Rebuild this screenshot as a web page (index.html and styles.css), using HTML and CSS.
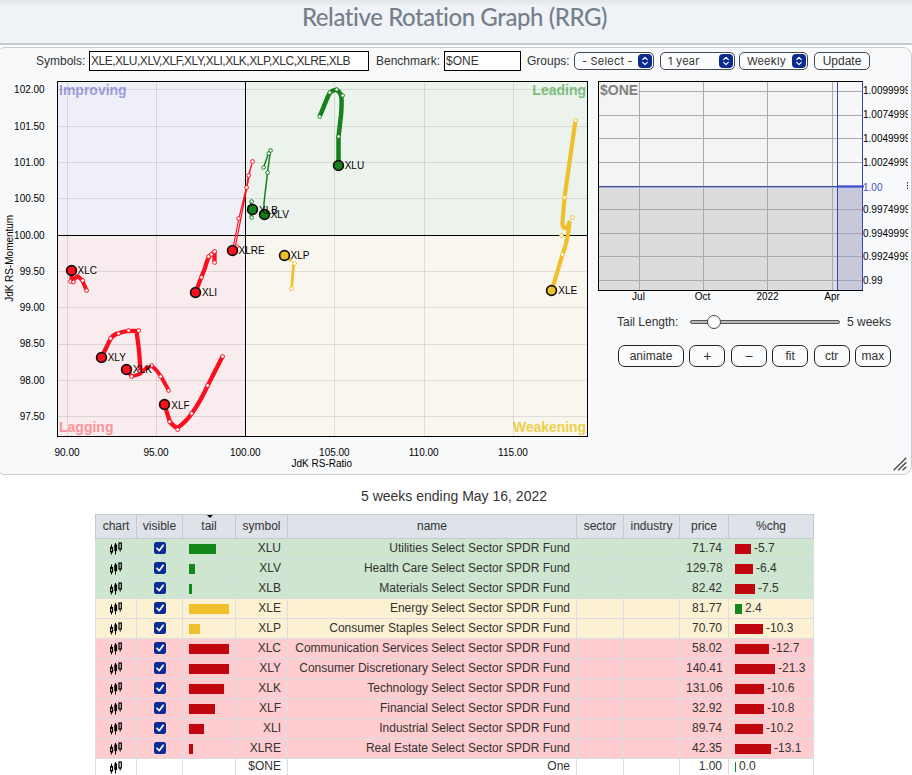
FILE: index.html
```html
<!DOCTYPE html>
<html lang="en">
<head>
<meta charset="utf-8">
<title>Relative Rotation Graph (RRG)</title>
<link rel="stylesheet" href="styles.css">
</head>
<body>
<header class="page-header"><h1>Relative Rotation Graph (RRG)</h1></header>
<main>
<section class="panel">
  <form class="toolbar">
    <label class="lbl-symbols" for="symbols">Symbols:</label>
    <input id="symbols" class="field symbols" type="text" value="XLE,XLU,XLV,XLF,XLY,XLI,XLK,XLP,XLC,XLRE,XLB">
    <label class="lbl-bench" for="bench">Benchmark:</label>
    <input id="bench" class="field bench" type="text" value="$ONE">
    <span class="lbl-groups">Groups:</span>
    <div class="select groups"><span>- Select -</span><svg class="stepper" viewBox="0 0 14 14"><path d="M4.7 5.6 7 3.4l2.3 2.2M4.7 8.4 7 10.6l2.3-2.2"/></svg></div>
    <div class="select period"><span>1 year</span><svg class="stepper" viewBox="0 0 14 14"><path d="M4.7 5.6 7 3.4l2.3 2.2M4.7 8.4 7 10.6l2.3-2.2"/></svg></div>
    <div class="select freq"><span>Weekly</span><svg class="stepper" viewBox="0 0 14 14"><path d="M4.7 5.6 7 3.4l2.3 2.2M4.7 8.4 7 10.6l2.3-2.2"/></svg></div>
    <button class="update" type="button">Update</button>
  </form>
  <div class="charts">
    <svg class="rrg" viewBox="0 75 594 399" width="594" height="399">
      <rect x="58" y="82" width="187" height="153" fill="#efeff8"/>
      <rect x="245" y="82" width="342" height="153" fill="#ebf3ec"/>
      <rect x="58" y="235" width="187" height="201" fill="#f9ecee"/>
      <rect x="245" y="235" width="342" height="201" fill="#f9f6ef"/>
      <g class="corner">
        <text x="59" y="95" fill="#9c9cdd">Improving</text>
        <text x="586" y="95" text-anchor="end" fill="#7fbf82">Leading</text>
        <text x="59" y="432" fill="#fb9399">Lagging</text>
        <text x="586" y="432" text-anchor="end" fill="#ecd04c" textLength="73">Weakening</text>
      </g>
      <path class="grid" d="M67.5 82V436M156.5 82V436M334.5 82V436M424.5 82V436M513.5 82V436M58 89.5H587M58 126.5H587M58 162.5H587M58 198.5H587M58 271.5H587M58 307.5H587M58 344.5H587M58 380.5H587M58 416.5H587"/>
      <path class="axis" d="M245.5 82V436M58 235.5H587"/>
      <rect class="frame" x="57.5" y="81.5" width="530" height="355"/>
      <g class="tick" text-anchor="end">
        <text x="44.700" y="93.3">102.00</text><text x="44.700" y="129.5">101.50</text><text x="44.700" y="166">101.00</text><text x="44.700" y="202.3">100.50</text><text x="44.700" y="238.5">100.00</text><text x="44.700" y="274.7">99.50</text><text x="44.700" y="311">99.00</text><text x="44.700" y="347.3">98.50</text><text x="44.700" y="383.5">98.00</text><text x="44.700" y="420">97.50</text>
      </g>
      <g class="tick" text-anchor="middle">
        <text x="67" y="456.3">90.00</text><text x="156" y="456.3">95.00</text><text x="245.3" y="456.3">100.00</text><text x="334.4" y="456.3">105.00</text><text x="423.7" y="456.3">110.00</text><text x="513" y="456.3">115.00</text>
        <text x="321.8" y="467.2" textLength="60.5">JdK RS-Ratio</text>
        <text transform="translate(12.8 258.3) rotate(-90)" textLength="87">JdK RS-Momentum</text>
      </g>
      <g class="green">
        <path stroke-width="4.5" d="M319.7 116.3C324 107 327 97 330 92.7Q336.500 86.500 340.500 94Q342.500 98 341 115L338.500 137V165"/>
        <path stroke-width="1.5" d="M264 214V203L267.500 172.500L270.500 150.500L268.500 153.500L263.500 167.500"/>
        <path stroke-width="2.5" d="M252 210L251 201.500V217M249 205V213"/>
        <g class="dots"><circle cx="319.7" cy="116.5" r="1.8"/><circle cx="329.700" cy="92.500" r="1.8"/><circle cx="336.700" cy="89.500" r="1.8"/><circle cx="342.700" cy="95.500" r="1.8"/><circle cx="338.600" cy="136.500" r="1.8"/><circle cx="270.600" cy="150.500" r="1.8"/><circle cx="268.700" cy="153.500" r="1.8"/><circle cx="263.600" cy="167.500" r="1.8"/><circle cx="267.600" cy="172.600" r="1.8"/><circle cx="251.600" cy="201.500" r="1.8"/><circle cx="251.600" cy="217.500" r="1.8"/></g>
      </g>
      <g class="red">
        <path stroke-width="1.2" d="M232.500 250.500L239 218L246.500 187L248.500 175L252 164M235.500 246L239 228L246.500 190L251 166"/>
        <path stroke-width="4.300" d="M195.500 292.500Q199 283 205 268Q208 256 211.500 254.500L214.500 252V262"/>
        <path stroke-width="4" d="M71.500 270.500V281M73 280L77.500 276L82 280L86.500 290"/>
        <path stroke-width="4.300" d="M101.500 357.500Q107 346 110.700 338.500Q114 334 118.500 333.500Q125 330.500 136.500 331Q139.500 350 140.500 370.500"/>
        <path stroke-width="3.800" d="M126.500 369.500L131.500 376.500L140 374L146 368L152 366Q157 370 161 376.500L168.500 390"/>
        <path stroke-width="4.300" d="M164.500 404.500Q167 413 170 422Q176 429 178.500 427Q186 422 192.500 412.500Q200 402 208 385L222.500 356.500"/>
        <g class="dots"><circle cx="252.500" cy="161.500" r="1.9"/><circle cx="248.600" cy="175.500" r="1.9"/><circle cx="246.600" cy="187.500" r="1.9"/><circle cx="238.600" cy="218.500" r="1.9"/><circle cx="236.500" cy="246.500" r="1.9"/><circle cx="201.500" cy="277.300" r="1.9"/><circle cx="208.600" cy="256.500" r="1.9"/><circle cx="214.600" cy="251.500" r="1.9"/><circle cx="211.500" cy="254.500" r="1.9"/><circle cx="214.600" cy="262.500" r="1.9"/><circle cx="70.500" cy="281.500" r="1.9"/><circle cx="73.500" cy="282" r="1.9"/><circle cx="82.600" cy="280.500" r="1.9"/><circle cx="86.600" cy="290.500" r="1.9"/><circle cx="110.600" cy="338.500" r="1.9"/><circle cx="118.600" cy="333.500" r="1.9"/><circle cx="128.600" cy="330.500" r="1.9"/><circle cx="138.700" cy="330.500" r="1.9"/><circle cx="131.600" cy="376.500" r="1.9"/><circle cx="151.600" cy="365.500" r="1.9"/><circle cx="160.600" cy="376.500" r="1.9"/><circle cx="168.600" cy="390.500" r="1.9"/><circle cx="169.600" cy="421.700" r="1.9"/><circle cx="177.600" cy="429.600" r="1.9"/><circle cx="191.600" cy="413.500" r="1.9"/><circle cx="207.600" cy="385.500" r="1.9"/><circle cx="222.600" cy="356.500" r="1.9"/></g>
      </g>
      <g class="gold">
        <path stroke-width="4.200" d="M575.500 120.500L564.500 197.500L562.500 222Q562 229 566.500 228L569.500 222.500Q568 240 562.500 254.500L552 290"/>
        <path stroke-width="2.800" d="M284.500 255.500L291.500 261M293.700 263L291.600 288"/>
        <g class="dots"><circle cx="575.500" cy="120.500" r="1.9"/><circle cx="564.500" cy="197.500" r="1.9"/><circle cx="572.500" cy="217.500" r="1.9"/><circle cx="561.500" cy="235.500" r="1.9"/><circle cx="562.500" cy="254.500" r="1.9"/><circle cx="294.500" cy="263.500" r="1.9"/><circle cx="291.500" cy="288.500" r="1.9"/></g>
      </g>
      <g class="heads">
        <g fill="#15801d"><circle cx="338.500" cy="165.500" r="4.900"/><circle cx="252.500" cy="209.500" r="4.900"/><circle cx="264.500" cy="214.500" r="4.900"/></g>
        <g fill="#fb0f1f"><circle cx="232.500" cy="250.500" r="4.900"/><circle cx="195.500" cy="292.500" r="4.900"/><circle cx="71.500" cy="270.500" r="4.900"/><circle cx="101.500" cy="357.500" r="4.900"/><circle cx="126.500" cy="369.500" r="4.900"/><circle cx="164.500" cy="404.500" r="4.900"/></g>
        <g fill="#f0c02c"><circle cx="551.500" cy="290.500" r="4.900"/><circle cx="284.500" cy="255.500" r="4.900"/></g>
      </g>
      <g class="tick">
        <text x="344.700" y="169">XLU</text><text x="259" y="213.500">XLB</text><text x="270.700" y="218">XLV</text><text x="238.500" y="254">XLRE</text><text x="290.500" y="259.300">XLP</text><text x="202" y="296.300">XLI</text><text x="77.500" y="274.300">XLC</text><text x="107.700" y="361.300">XLY</text><text x="133" y="373.300">XLK</text><text x="171.300" y="408.500">XLF</text><text x="558.300" y="294">XLE</text>
      </g>
    </svg>
    <div class="side">
      <svg class="mini" viewBox="594 75 314 232" width="314" height="232">
        <rect x="599" y="82" width="264" height="104" fill="#f4f4f4"/>
        <rect x="599" y="186" width="264" height="104" fill="#dcdcdc"/>
        <rect x="837" y="82" width="26" height="104" fill="#f7f7fa"/>
        <path class="mini-grid" d="M639.500 82V290M703.500 82V290M767.500 82V290M832.500 82V290M599 91.500H863M599 115.500H863M599 138.500H863M599 162.500H863M599 209.500H863M599 233.500H863M599 256.500H863M599 280.500H863"/>
        <rect x="837" y="186" width="26" height="104" fill="#8f8fd8" fill-opacity=".26"/>
        <rect x="599" y="82" width="39" height="14" fill="#f4f4f4"/>
        <rect class="frame" x="598.500" y="81.500" width="264" height="209"/>
        <path d="M599 187.500H837" stroke="#a6a6e2"/><path d="M599 186.500H837" stroke="#3f4a91"/>
        <path d="M837.500 82V290M862.500 82V290" stroke="#3548b5"/>
        <path d="M837 186.500H864" stroke="#3d50cd" stroke-width="2.300"/>
        <text class="mini-title" x="600" y="95">$ONE</text>
        <g class="tick">
          <text x="863" y="94.300">1.009999999</text><text x="863" y="118.300">1.007499999</text><text x="863" y="142">1.004999999</text><text x="863" y="165.500">1.002499999</text><text x="863" y="191.300" class="now">1.00</text><text x="863" y="213.300">0.997499999</text><text x="863" y="236.500">0.994999999</text><text x="863" y="260.300">0.992499999</text><text x="863" y="283.500">0.99</text>
        </g>
        <path d="M907.500 182v7" stroke="#222" stroke-width="1" stroke-dasharray="1.500 1.300"/>
        <g class="tick" text-anchor="middle"><text x="638.500" y="300.300">Jul</text><text x="702.500" y="300.300">Oct</text><text x="767.500" y="300.300">2022</text><text x="832" y="300.300">Apr</text></g>
      </svg>
      <div class="tail-row"><span class="tail-label">Tail Length:</span><div class="slider"><span class="knob"></span></div><span>5 weeks</span></div>
      <div class="actions"><button class="wide">animate</button><button class="sign">+</button><button class="sign">−</button><button>fit</button><button>ctr</button><button>max</button></div>
      <svg class="grip" viewBox="0 0 14 14"><path d="M.7 13.300 13.300.7M5.200 13.300 13.300 5.200M9.700 13.300 13.300 9.700"/></svg>
    </div>
  </div>
</section>
<p class="range">5 weeks ending May 16, 2022</p>
<table class="funds">
  <colgroup><col class="c1"><col class="c2"><col class="c3"><col class="c4"><col class="c5"><col class="c6"><col class="c7"><col class="c8"><col class="c9"></colgroup>
  <thead><tr><th>chart</th><th>visible</th><th class="sorted">tail</th><th>symbol</th><th>name</th><th>sector</th><th>industry</th><th>price</th><th>%chg</th></tr></thead>
  <tbody id="rows"></tbody>
</table>
</main>
<script src="app.js"></script>
</body>
</html>
```

FILE: styles.css
```css
* { box-sizing: border-box; }
body { margin: 0; height: 775px; overflow: hidden; background: #fff; color: #333; font: 12px "Liberation Sans", Arial, sans-serif; }
.page-header { height: 45px; border-bottom: 2px solid #c6cacf; background: linear-gradient(#e3e5e9, #eff2f6 7px, #f0f3f7); text-align: center; }
.page-header h1 { margin: 0; padding-right: 3px; color: #75808b; font: 500 24px/34px Lato, sans-serif; letter-spacing: -.42px; }
.panel { width: 916px; height: 428px; margin: 2px 0 0 -4px; padding-left: 3px; border: 1px solid #c9ccd0; border-radius: 9px; background: #f7f9fb; }
.toolbar { display: flex; height: 27px; padding: 3px 0 0 36px; align-items: flex-start; line-height: 20px; }
.lbl-symbols { width: 53px; }
.lbl-bench { width: 75px; padding-left: 7px; }
.lbl-groups { width: 53px; padding-left: 6px; }
.field { height: 20px; padding: 0 2px; border: 1px solid #000; background: #fff; color: #333; font: 12px "Liberation Sans", Arial, sans-serif; }
.symbols { width: 280px; padding-left: 1px; letter-spacing: -.48px; }
.bench { width: 77px; padding-left: 1px; }
.select, .update { height: 18px; margin-top: 1px; border: 1px solid #45484c; border-radius: 5px; background: #fbfcfd; color: #333; }
.select { display: flex; justify-content: space-between; align-items: center; padding: 0 1px 0 7px; font: 11px/16px Inter, sans-serif; letter-spacing: .2px; }
.groups { width: 80px; }
.period { width: 75px; margin-left: 6px; }
.freq { width: 69px; margin-left: 4px; }
.stepper { width: 14px; height: 14px; border-radius: 4px; background: #0b2b8e; }
.stepper path { fill: none; stroke: #fff; stroke-width: 1.2; stroke-linecap: round; stroke-linejoin: round; }
.update { width: 56px; margin-left: 6px; padding: 0; font: 12px "Liberation Sans", Arial, sans-serif; }
.charts { display: flex; }
.rrg, .mini { display: block; flex: none; }
.grid { stroke: #000; stroke-opacity: .1; }
.axis, .frame { stroke: #000; fill: none; }
.corner, .mini-title { font-size: 14px; font-weight: bold; }
.mini-title { fill: #808080; }
.mini-grid { stroke: #aaa; }
.tick { font-size: 10px; fill: #000; }
.tick .now { fill: #4650c4; }
.green > path, .red > path, .gold > path { fill: none; stroke-linejoin: round; }
.green { stroke: #15801d; }
.red { stroke: #fb0f1f; }
.gold { stroke: #f0c02c; }
.dots { fill: #fff; stroke-width: 1; }
.heads { stroke: #111; stroke-width: 1.7; }
.side { position: relative; width: 317px; }
.tail-row { display: flex; align-items: center; height: 29px; padding-left: 23px; }
.tail-label { width: 73px; }
.slider { display: flex; align-items: center; width: 150px; height: 4px; margin-right: 7px; padding-left: 16px; border: 1px solid #555; border-radius: 2px; background: #b8b8b8; }
.knob { flex: none; width: 14px; height: 14px; border: 1px solid #444; border-radius: 50%; background: #fff; }
.actions { display: flex; gap: 5.4px; padding: 9px 0 0 24px; }
.actions button { width: 36px; height: 22px; padding: 0; border: 1px solid #222; border-radius: 7px; background: #fafbfc; color: #333; font: 12px "Liberation Sans", Arial, sans-serif; }
.actions .wide { width: 66px; }
.actions .sign { font-size: 14px; line-height: 18px; }
.grip { position: absolute; right: 4px; bottom: 3px; width: 14px; height: 14px; }
.grip path { fill: none; stroke: #444; stroke-width: 1.3; }
.range { height: 39px; margin: 0; padding-right: 4px; font-size: 14px; line-height: 42px; text-align: center; }
.funds { width: 719px; margin-left: 95px; table-layout: fixed; border-collapse: collapse; }
.c1 { width: 41px; } .c2 { width: 46px; } .c3 { width: 53px; } .c4 { width: 52px; } .c5 { width: 289px; }
.c6 { width: 47px; } .c7 { width: 56px; } .c8 { width: 49px; } .c9 { width: 85px; }
.funds th, .funds td { padding: 0 6px; border: 1px solid #d8dfe2; text-align: right; white-space: nowrap; }
.funds th { height: 24px; padding: 0 0 2px; border-color: #c6cbd0; background: #dee2e9; font-weight: normal; text-align: center; }
.funds td { height: 20px; line-height: 17px; }
.funds .icon { padding: 0; text-align: center; }
.funds .icon svg { display: block; margin: 0 auto; }
.funds .lead .icon, .funds .weak .icon, .funds .lag .icon { padding-bottom: 1px; }
.sorted { position: relative; }
.sorted::before { position: absolute; top: 0; left: 24px; border: 3px solid transparent; border-top-color: #000; border-bottom: 0; content: ""; }
.funds .lead td { background: #cee6cf; }
.funds .weak td { background: #fcf1d2; }
.funds .lag td { background: #ffcccf; }
.funds .last td { height: 17px; padding-bottom: 2px; line-height: 14px; }
.funds .last .icon { padding-bottom: 0; }
.funds .bar-cell { text-align: left; }
.bar { display: inline-block; height: 10px; margin-right: 3px; vertical-align: -2px; }
.bar.g { background: #13881a; }
.bar.y { background: #f0c02c; }
.bar.r { background: #c20610; }
```

FILE: app.js
```js
// group, tail width, symbol, name, price, change bar width, change
const funds = [
  ["lead", 27, "XLU", "Utilities Select Sector SPDR Fund", "71.74", 16, "-5.7"],
  ["lead", 6, "XLV", "Health Care Select Sector SPDR Fund", "129.78", 18, "-6.4"],
  ["lead", 3, "XLB", "Materials Select Sector SPDR Fund", "82.42", 20, "-7.5"],
  ["weak", 40, "XLE", "Energy Select Sector SPDR Fund", "81.77", 7, "2.4"],
  ["weak", 11, "XLP", "Consumer Staples Select Sector SPDR Fund", "70.70", 28, "-10.3"],
  ["lag", 40, "XLC", "Communication Services Select Sector SPDR Fund", "58.02", 34, "-12.7"],
  ["lag", 40, "XLY", "Consumer Discretionary Select Sector SPDR Fund", "140.41", 40, "-21.3"],
  ["lag", 35, "XLK", "Technology Select Sector SPDR Fund", "131.06", 29, "-10.6"],
  ["lag", 26, "XLF", "Financial Select Sector SPDR Fund", "32.92", 29, "-10.8"],
  ["lag", 15, "XLI", "Industrial Select Sector SPDR Fund", "89.74", 28, "-10.2"],
  ["lag", 4, "XLRE", "Real Estate Select Sector SPDR Fund", "42.35", 36, "-13.1"],
  ["last", 0, "$ONE", "One", "1.00", 1, "0.0"]
];
const candles = '<svg width="12" height="13" viewBox="0 0 12 13"><g fill="none" stroke="#000"><path d="M1.500 2.500v3M1.500 10v2.500"/><rect x=".5" y="5.500" width="2" height="4.500" stroke-width="1.200"/><path d="M5.500 1v11.500"/><path d="M5.700 2.500v6.500" stroke-width="2.800"/><rect x="9" y="1" width="2.300" height="6" stroke-width="1.200"/><path d="M10.200 7v2.500"/></g></svg>';
const check = '<svg width="12" height="12" viewBox="0 0 12 12"><rect width="12" height="12" rx="2.500" fill="#0a2c96"/><path d="M3 6.300 5.200 8.700 9.200 3.300" fill="none" stroke="#fff" stroke-width="1.700" stroke-linecap="round" stroke-linejoin="round"/></svg>';
const tone = { lead: "g", weak: "y", lag: "r" };
const bar = (color, width) => `<span class="bar ${color}" style="width:${width}px"></span>`;
document.getElementById("rows").innerHTML = funds.map(([group, tail, symbol, name, price, width, change]) =>
  `<tr class="${group}"><td class="icon">${candles}</td><td class="icon">${tail ? check : ""}</td>` +
  `<td class="bar-cell">${tail ? bar(tone[group], tail) : ""}</td><td>${symbol}</td><td>${name}</td><td></td><td></td>` +
  `<td>${price}</td><td class="bar-cell">${bar(change[0] === "-" ? "r" : "g", width)}${change}</td></tr>`).join("");
```
